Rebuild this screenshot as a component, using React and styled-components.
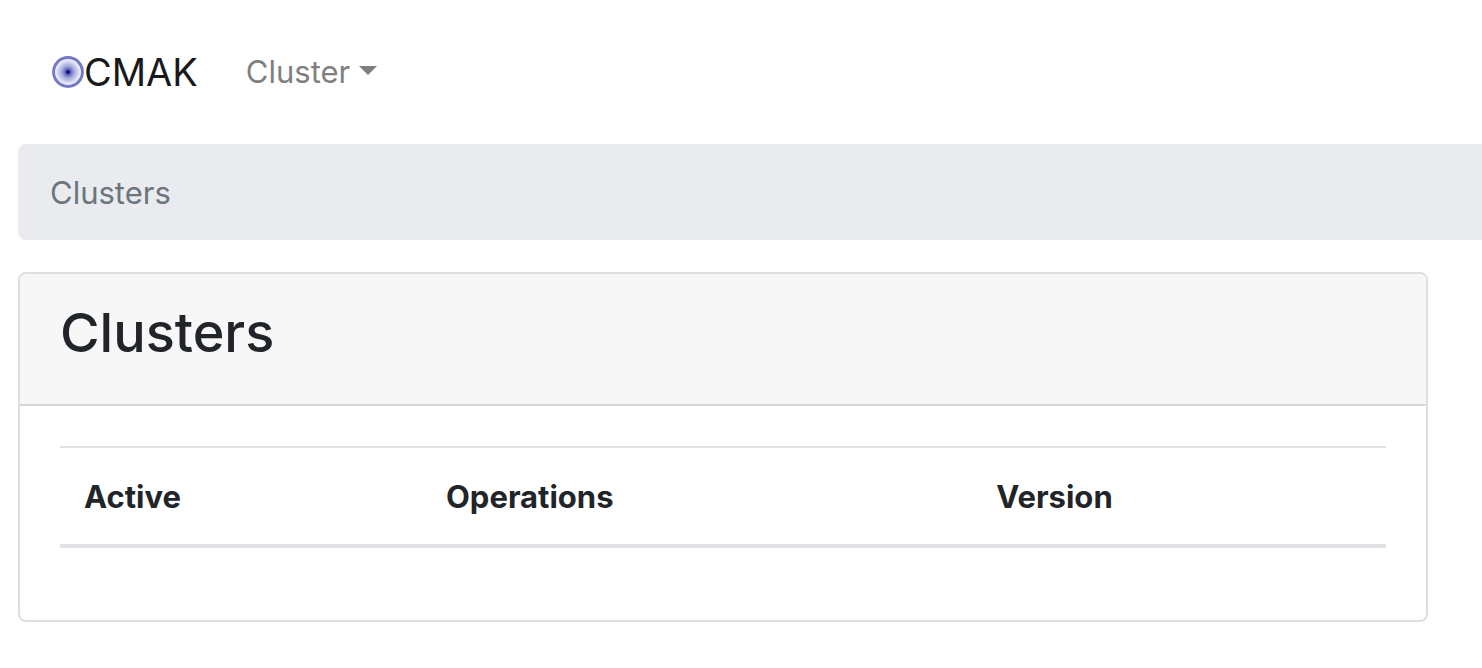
import React from "react";
import styled, { createGlobalStyle } from "styled-components";

const GlobalStyle = createGlobalStyle`
  *, *::before, *::after { box-sizing: border-box; }
  body {
    margin: 0;
    background: #fff;
    color: #212529;
    font-family: Inter, "Liberation Sans", sans-serif;
    font-size: 31px;
    line-height: 48px;
  }
`;

const Page = styled.div`
  padding-left: 18px;
`;

const Navbar = styled.nav`
  display: flex;
  align-items: center;
  gap: 48px;
  min-height: 144px;
  padding: 16px 32px;
`;

const Brand = styled.a`
  display: flex;
  align-items: center;
  color: #18191a;
  font-size: 38px;
  line-height: 60px;
  text-decoration: none;
`;

const Logo = styled.svg`
  display: block;
  width: 34px;
  height: 34px;
`;

const MenuToggle = styled.button`
  display: flex;
  align-items: center;
  gap: 9px;
  padding: 0;
  border: 0;
  background: none;
  color: #7f7f7f;
  font: inherit;
  cursor: pointer;

  &::after {
    content: "";
    margin-bottom: 4px;
    border-top: 9px solid;
    border-right: 9px solid transparent;
    border-left: 9px solid transparent;
  }
`;

const Breadcrumb = styled.ol`
  margin: 0 0 32px;
  padding: 25px 32px 23px;
  border-radius: 8px 0 0 8px;
  background: #e9ebee;
  color: #6c757d;
  list-style: none;
`;

const Card = styled.section`
  margin-right: 54px;
  border: 2px solid #dfdfdf;
  border-radius: 8px;
  overflow: hidden;
`;

const CardHeader = styled.header`
  padding: 26px 40px 38px;
  border-bottom: 2px solid #d8d8d8;
  background: #f7f7f7;
`;

const Title = styled.h1`
  margin: 0;
  font-size: 54px;
  font-weight: 500;
  line-height: 66px;
`;

const CardBody = styled.div`
  padding: 40px;
`;

const Table = styled.table`
  width: 100%;
  margin-bottom: 32px;
  border-collapse: separate;
  border-spacing: 0;
  table-layout: fixed;
`;

const HeadCell = styled.th`
  width: ${({ $share }) => $share};
  padding: 25px 24px 23px;
  border-top: 2px solid #dfe1e5;
  border-bottom: 4px solid #dfe1e5;
  font-weight: 700;
  text-align: left;
`;

const columns = [
  { label: "Active", share: "27.3%" },
  { label: "Operations", share: "41.5%" },
  { label: "Version", share: "31.2%" },
];

export default function App() {
  return (
    <>
      <GlobalStyle />
      <Page>
        <Navbar>
          <Brand href="#">
            <Logo viewBox="0 0 34 34" aria-hidden="true">
              <defs>
                <radialGradient id="core">
                  <stop offset="0" stopColor="#4a4eac" />
                  <stop offset="0.3" stopColor="#7074c2" />
                  <stop offset="0.45" stopColor="#9fa3d8" />
                  <stop offset="0.7" stopColor="#c3c6e8" />
                  <stop offset="0.85" stopColor="#dcdff4" />
                  <stop offset="1" stopColor="#eceefa" />
                </radialGradient>
              </defs>
              <circle cx="18" cy="17" r="14.4" fill="#eceefa" stroke="#757ac2" strokeWidth="3" />
              <circle cx="18" cy="17" r="12.6" fill="url(#core)" />
              <circle cx="18" cy="17" r="2" fill="#10108c" />
            </Logo>
            CMAK
          </Brand>
          <MenuToggle type="button" aria-haspopup="true">Cluster</MenuToggle>
        </Navbar>
        <Breadcrumb>
          <li>Clusters</li>
        </Breadcrumb>
        <Card>
          <CardHeader>
            <Title>Clusters</Title>
          </CardHeader>
          <CardBody>
            <Table>
              <thead>
                <tr>
                  {columns.map(({ label, share }) => (
                    <HeadCell key={label} scope="col" $share={share}>{label}</HeadCell>
                  ))}
                </tr>
              </thead>
            </Table>
          </CardBody>
        </Card>
      </Page>
    </>
  );
}
